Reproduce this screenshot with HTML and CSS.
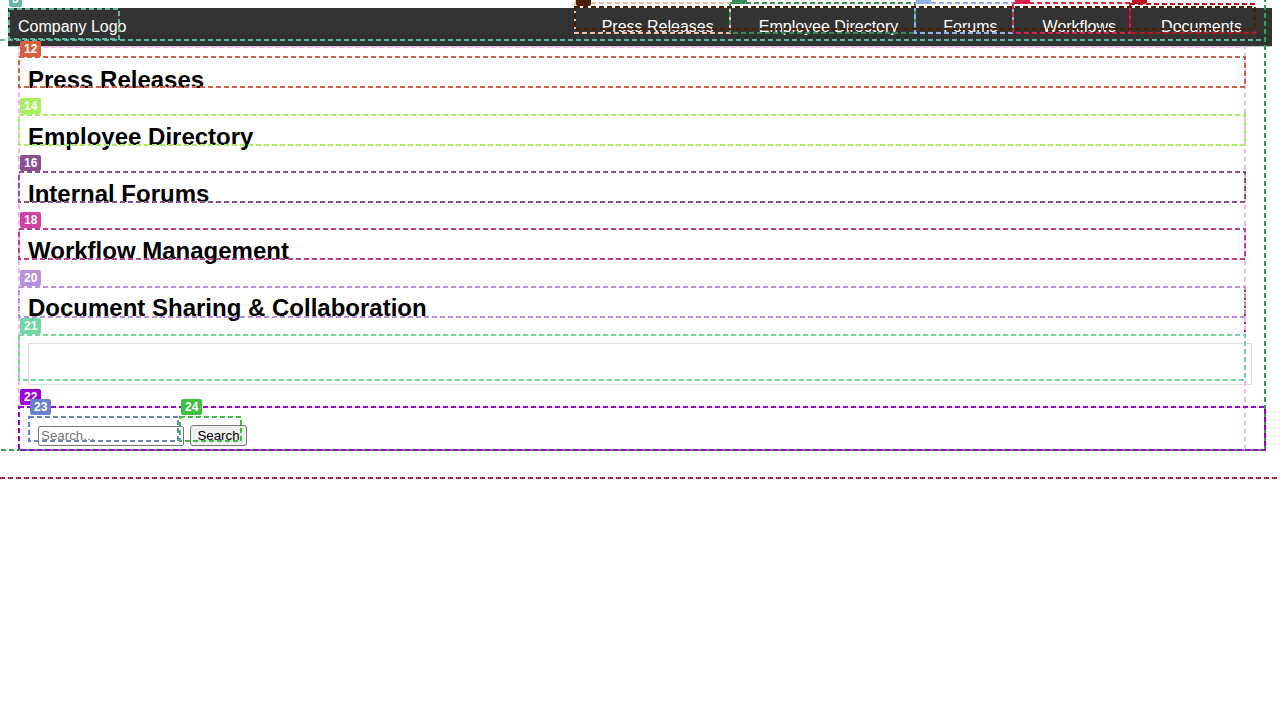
FILE: index.html
```html
<!DOCTYPE html>
<html lang="en">
<head>
<meta charset="utf-8">
<title>Intranet</title>
<link rel="stylesheet" href="styles.css">
</head>
<body>
<header class="topbar">
  <div class="logo">Company Logo</div>
  <nav>
    <ul class="nav">
      <li><a href="#press">Press Releases</a></li>
      <li><a href="#directory">Employee Directory</a></li>
      <li><a href="#forums">Forums</a></li>
      <li><a href="#workflows">Workflows</a></li>
      <li><a href="#documents">Documents</a></li>
    </ul>
  </nav>
</header>
<main class="content">
  <section class="block" id="press"><h2>Press Releases</h2></section>
  <section class="block" id="directory"><h2>Employee Directory</h2></section>
  <section class="block" id="forums"><h2>Internal Forums</h2></section>
  <section class="block" id="workflows"><h2>Workflow Management</h2></section>
  <section class="block" id="documents"><h2>Document Sharing &amp; Collaboration</h2></section>
  <div class="panel-wrap"><div class="panel"></div></div>
  <form class="search">
    <input class="search-input" type="text" placeholder="Search...">
    <button class="search-btn" type="button">Search</button>
  </form>
</main>

<div class="marks" aria-hidden="true">
  <svg class="marks-svg" width="1280" height="720" viewBox="0 0 1280 720">
    <g fill="none" stroke-width="2" stroke-dasharray="5 3">
      <rect x="-5" y="-5" width="1270" height="455" stroke="#3a9a55"/>
      <line x1="0" y1="478" x2="1280" y2="478" stroke="#a03048"/>
      <line x1="1245" y1="287" x2="1245" y2="335" stroke="#a03048"/>
      <rect x="19" y="47" width="1226" height="403" stroke="#f2b4f2"/>
      <rect x="9" y="9" width="110" height="30" stroke="#5fb8a2"/>
      <line x1="0" y1="40" x2="1263" y2="40" stroke="#5fb8a2"/>
      <rect x="575" y="3" width="155" height="30" stroke="#f0c0a8"/>
      <rect x="730" y="3" width="185" height="30" stroke="#3a8a5a"/>
      <rect x="915" y="3" width="98" height="30" stroke="#8fb0e8"/>
      <rect x="1013" y="3" width="117" height="30" stroke="#e0204a"/>
      <rect x="1130" y="4" width="125" height="29" stroke="#c01020"/>
      <rect x="575" y="7" width="680" height="22" stroke="#4a1e00"/>
      <rect x="19" y="57" width="1226" height="30" stroke="#d0604a"/>
      <rect x="19" y="115" width="1226" height="30" stroke="#a8f060"/>
      <rect x="19" y="172" width="1226" height="30" stroke="#8a5090"/>
      <rect x="19" y="229" width="1226" height="30" stroke="#c0408a"/>
      <rect x="19" y="287" width="1226" height="30" stroke="#b890e0"/>
      <rect x="19" y="335" width="1226" height="45" stroke="#70d8a0"/>
      <rect x="19" y="407" width="1246" height="43" stroke="#a000d8"/>
      <rect x="29" y="417" width="149" height="24" stroke="#6a80d0"/>
      <rect x="180" y="417" width="61" height="24" stroke="#40c040"/>
    </g>
  </svg>
  <span class="tag t3">3</span>
  <span class="tag t-nav tn0"></span>
  <span class="tag t-nav tn1"></span>
  <span class="tag t-nav tn2"></span>
  <span class="tag t-nav tn3"></span>
  <span class="tag t-nav tn4"></span>
  <span class="tag t-nav tn5"></span>
  <span class="tag t12">12</span>
  <span class="tag t14">14</span>
  <span class="tag t16">16</span>
  <span class="tag t18">18</span>
  <span class="tag t20">20</span>
  <span class="tag t21">21</span>
  <span class="tag t22">22</span>
  <span class="tag t23">23</span>
  <span class="tag t24">24</span>
</div>
</body>
</html>
```

FILE: styles.css
```css
html, body {
  background: #ffffff;
}

body {
  margin: 8px;
  font-family: "Liberation Sans", Arial, sans-serif;
  color: #000000;
}

.topbar {
  display: flex;
  justify-content: space-between;
  align-items: center;
  height: 38px;
  padding: 0 15px 0 10px;
  background: #333333;
  color: #ffffff;
  border-bottom: 1px solid #c4c4c4;
  font-size: 16px;
}

.logo {
  line-height: 18px;
}

.nav {
  display: flex;
  list-style: none;
  margin: 0;
  padding: 0;
}

.nav li {
  margin-left: 15px;
}

.nav a {
  display: block;
  padding: 0 15px;
  color: #ffffff;
  text-decoration: none;
  line-height: 18px;
}

.content {
  padding: 10px 20px 0 10px;
}

.block {
  padding: 9px 10px 0;
  margin-bottom: 20px;
}

.block h2 {
  margin: 0;
  font-size: 24px;
  line-height: 28px;
  font-weight: bold;
}

.panel-wrap {
  padding-top: 1px;
}

.panel {
  box-sizing: border-box;
  width: 1224px;
  height: 42px;
  margin: 0 0 20px 10px;
  border: 1px solid #dddddd;
}

.search {
  display: flex;
  align-items: center;
  gap: 6px;
  margin: 0;
  padding: 20px 20px 3px;
}

.search-input {
  box-sizing: border-box;
  width: 146px;
  height: 20px;
  margin: 0;
  padding: 1px 2px;
  border: 1px solid #767676;
  border-radius: 2px;
  font-family: "Liberation Sans", Arial, sans-serif;
  font-size: 13.33px;
  color: #000000;
}

.search-input::placeholder {
  color: #757575;
}

.search-btn {
  box-sizing: border-box;
  width: 57px;
  height: 21px;
  margin: 0;
  padding: 1px 6px;
  border: 1px solid #767676;
  border-radius: 3px;
  background: #efefef;
  font-family: "Liberation Sans", Arial, sans-serif;
  font-size: 13.33px;
  color: #000000;
}

/* annotation overlay */
.marks {
  position: absolute;
  top: 0;
  left: 0;
  width: 1280px;
  height: 720px;
  pointer-events: none;
  overflow: hidden;
}

.marks-svg {
  position: absolute;
  top: 0;
  left: 0;
}

.tag {
  position: absolute;
  height: 16px;
  padding: 0 4px;
  border-radius: 2px;
  color: #ffffff;
  font-family: "Liberation Sans", Arial, sans-serif;
  font-size: 12px;
  font-weight: bold;
  line-height: 16px;
}

.t3 { left: 9px; top: -9px; padding: 0 3px; background: #5fb8a2; }
.t-nav { width: 7px; height: 10px; }
.tn0 { left: 575px; top: -7px; background: #f0c0a8; }
.tn1 { left: 576px; top: -4px; background: #4a1e00; }
.tn2 { left: 732px; top: -6px; background: #3a8a5a; }
.tn3 { left: 916px; top: -6px; background: #8fb0e8; }
.tn4 { left: 1015px; top: -6px; background: #e0204a; }
.tn5 { left: 1132px; top: -6px; background: #c01020; }
.t12 { left: 20px; top: 41px; background: #d9603f; }
.t14 { left: 20px; top: 98px; background: #a8f060; }
.t16 { left: 20px; top: 155px; background: #8a5090; }
.t18 { left: 20px; top: 212px; background: #d040a0; }
.t20 { left: 20px; top: 270px; background: #b890e0; }
.t21 { left: 20px; top: 318px; background: #70d8a0; }
.t22 { left: 20px; top: 389px; background: #a000d8; }
.t23 { left: 30px; top: 399px; background: #6a80d0; }
.t24 { left: 181px; top: 399px; background: #40c040; }
```
